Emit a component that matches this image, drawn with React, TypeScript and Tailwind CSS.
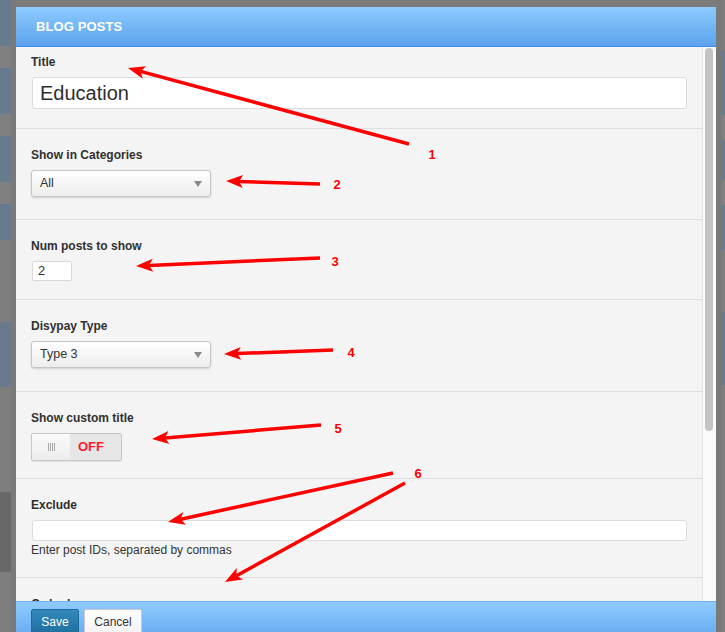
import React from "react";

type Pt = [number, number];

const arrows: { from: Pt; to: Pt }[] = [
  { from: [409, 144], to: [128, 68] },
  { from: [320, 184], to: [226, 181] },
  { from: [320, 258], to: [136, 266] },
  { from: [333, 350], to: [224, 354] },
  { from: [321, 425], to: [152, 439] },
  { from: [393, 473], to: [168, 522] },
  { from: [405, 483], to: [225, 582] },
];

const nums = [
  { t: "1", x: 432, y: 154 },
  { t: "2", x: 337, y: 184 },
  { t: "3", x: 335, y: 261 },
  { t: "4", x: 351, y: 352 },
  { t: "5", x: 338, y: 428 },
  { t: "6", x: 418, y: 473 },
];

function Arrow({ from, to }: { from: Pt; to: Pt }) {
  const dx = to[0] - from[0];
  const dy = to[1] - from[1];
  const len = Math.hypot(dx, dy);
  const ux = dx / len;
  const uy = dy / len;
  const px = -uy;
  const py = ux;
  const hl = 17;
  const hw = 6.5;
  const bx = to[0] - ux * hl;
  const by = to[1] - uy * hl;
  const nx = to[0] - ux * (hl - 4);
  const ny = to[1] - uy * (hl - 4);
  const pts = [
    `${to[0]},${to[1]}`,
    `${bx + px * hw},${by + py * hw}`,
    `${nx},${ny}`,
    `${bx - px * hw},${by - py * hw}`,
  ].join(" ");
  return (
    <g>
      <line x1={from[0]} y1={from[1]} x2={nx} y2={ny} stroke="#ff0000" strokeWidth={3.5} strokeLinecap="butt" />
      <polygon points={pts} fill="#ff0000" />
    </g>
  );
}

function Label({ children }: { children: React.ReactNode }) {
  return <div className="text-[12px] leading-[16px] font-bold text-[#303030] mb-[7px]">{children}</div>;
}

function Select({ value }: { value: string }) {
  return (
    <div className="w-[180px] h-[27px] rounded-[3px] border border-[#c4c4c4] bg-gradient-to-b from-[#ffffff] to-[#ededed] shadow-[0_1px_2px_rgba(0,0,0,0.15)] flex items-center justify-between pl-[8px] pr-[8px]">
      <span className="text-[12.5px] text-[#333]">{value}</span>
      <svg width="8" height="6" viewBox="0 0 8 6">
        <polygon points="0,0 8,0 4,6" fill="#8a8a8a" />
      </svg>
    </div>
  );
}

const leftBlocks: { h: number; c: string }[] = [
  { h: 46, c: "#687a8e" },
  { h: 22, c: "#808080" },
  { h: 46, c: "#687a8e" },
  { h: 22, c: "#808080" },
  { h: 46, c: "#687a8e" },
  { h: 22, c: "#808080" },
  { h: 36, c: "#687a8e" },
  { h: 82, c: "#7e7e7e" },
  { h: 65, c: "#6a7a8c" },
  { h: 105, c: "#7e7e7e" },
  { h: 80, c: "#686868" },
  { h: 60, c: "#7e7e7e" },
];

const rightBlocks: { h: number; c: string }[] = [
  { h: 50, c: "#7c7c7c" },
  { h: 65, c: "#687a8e" },
  { h: 25, c: "#808080" },
  { h: 40, c: "#687a8e" },
  { h: 25, c: "#808080" },
  { h: 45, c: "#687a8e" },
  { h: 62, c: "#7e7e7e" },
  { h: 73, c: "#687a8e" },
  { h: 247, c: "#7e7e7e" },
];

export default function App() {
  return (
    <div className="relative w-[725px] h-[632px] overflow-hidden bg-[#7b7b7b] flex font-[Liberation_Sans,Arial,sans-serif]">
      {/* left backdrop strip */}
      <div className="w-[16px] flex shrink-0">
        <div className="w-[11px] flex flex-col">
          {leftBlocks.map((b, i) => (
            <div key={i} style={{ height: b.h, background: b.c }} />
          ))}
        </div>
        <div className="w-[5px] bg-[#7a7a7a]" />
      </div>

      {/* modal column */}
      <div className="w-[700px] shrink-0 pt-[7px] flex flex-col">
        <div className="flex flex-col bg-[#f4f4f4]">
          {/* header */}
          <div className="h-[40px] bg-gradient-to-b from-[#8dcbff] to-[#5ca2ec] border-b border-[#3b8ef0] flex items-center pl-[20px]">
            <span className="text-white font-bold text-[13px] tracking-[0.1px]">BLOG POSTS</span>
          </div>

          {/* body */}
          <div className="h-[554px] flex overflow-hidden">
            <div className="flex-1 min-w-0 flex flex-col">
              {/* Title */}
              <div className="pt-[7px] pb-[19px] px-[15px] border-b border-[#dedede]">
                <Label>Title</Label>
                <div className="ml-px h-[32px] rounded-[3px] border border-[#dcdcdc] bg-white flex items-center pl-[7px]">
                  <span className="text-[20px] text-[#2e2e2e]">Education</span>
                </div>
              </div>

              {/* Show in Categories */}
              <div className="pt-[18px] pb-[22px] px-[15px] border-b border-[#dedede]">
                <Label>Show in Categories</Label>
                <Select value="All" />
              </div>

              {/* Num posts */}
              <div className="pt-[18px] pb-[18px] px-[15px] border-b border-[#dedede]">
                <Label>Num posts to show</Label>
                <div className="ml-px w-[40px] h-[20px] rounded-[2px] border border-[#d8d8d8] bg-white flex items-center pl-[5px]">
                  <span className="text-[13px] text-[#333]">2</span>
                </div>
              </div>

              {/* Display type */}
              <div className="pt-[18px] pb-[23px] px-[15px] border-b border-[#dedede]">
                <Label>Disypay Type</Label>
                <Select value="Type 3" />
              </div>

              {/* Toggle */}
              <div className="pt-[18px] pb-[17px] px-[15px] border-b border-[#dedede]">
                <Label>Show custom title</Label>
                <div className="w-[91px] h-[28px] rounded-[2px] border border-[#c6c6c6] flex overflow-hidden shadow-[0_1px_1px_rgba(0,0,0,0.08)]">
                  <div className="w-[38px] h-full bg-gradient-to-b from-[#fafafa] to-[#ececec] flex items-center justify-center gap-[1px]">
                    <div className="w-px h-[8px] bg-[#a8a8a8]" />
                    <div className="w-px h-[8px] bg-[#a8a8a8]" />
                    <div className="w-px h-[8px] bg-[#a8a8a8]" />
                    <div className="w-px h-[8px] bg-[#a8a8a8]" />
                  </div>
                  <div className="flex-1 h-full bg-[#e7e6e6] flex items-center pl-[8px]">
                    <span className="text-[13px] font-bold text-[#ff1a2e]">OFF</span>
                  </div>
                </div>
              </div>

              {/* Exclude */}
              <div className="pt-[18px] pb-[19px] px-[15px] border-b border-[#dedede]">
                <Label>Exclude</Label>
                <div className="ml-px h-[21px] rounded-[3px] border border-[#dcdcdc] bg-white" />
                <div className="mt-[1px] text-[12px] leading-[16px] text-[#333]">Enter post IDs, separated by commas</div>
              </div>

              {/* Order by (cut off) */}
              <div className="pt-[18px] px-[15px]">
                <Label>Order by</Label>
              </div>
            </div>

            {/* scrollbar */}
            <div className="w-[14px] shrink-0 border-l border-[#e4e4e4] bg-[#fbfbfb] pl-[2px] pt-px">
              <div className="w-[8px] h-[383px] rounded-full bg-[#c3c3c3]" />
            </div>
          </div>

          {/* footer */}
          <div className="h-[40px] border-t border-[#6fb2f3] bg-gradient-to-b from-[#8fcbff] to-[#5fa6ee] flex items-start pt-[7px] pl-[15px] gap-[5px]">
            <div className="w-[48px] h-[26px] rounded-[2px] border border-[#1e6a96] bg-gradient-to-b from-[#3389bb] to-[#1f6f9f] flex items-center justify-center">
              <span className="text-white text-[12px]">Save</span>
            </div>
            <div className="w-[58px] h-[26px] rounded-[2px] border border-[#c9c9c9] bg-gradient-to-b from-[#ffffff] to-[#f3f3f3] flex items-center justify-center">
              <span className="text-[#333] text-[12px]">Cancel</span>
            </div>
          </div>
        </div>
      </div>

      {/* right backdrop strip */}
      <div className="w-[9px] flex shrink-0">
        <div className="w-[5px] bg-[#797979]" />
        <div className="w-[4px] flex flex-col">
          {rightBlocks.map((b, i) => (
            <div key={i} style={{ height: b.h, background: b.c }} />
          ))}
        </div>
      </div>

      {/* annotation overlay */}
      <svg className="absolute left-0 top-0 pointer-events-none" width="725" height="632" viewBox="0 0 725 632">
        {arrows.map((a, i) => (
          <Arrow key={i} from={a.from} to={a.to} />
        ))}
        {nums.map((n) => (
          <text
            key={n.t}
            x={n.x}
            y={n.y}
            fill="#ff0000"
            fontSize="13"
            fontWeight="bold"
            fontFamily="Liberation Sans, Arial, sans-serif"
            textAnchor="middle"
            dominantBaseline="central"
          >
            {n.t}
          </text>
        ))}
      </svg>
    </div>
  );
}
